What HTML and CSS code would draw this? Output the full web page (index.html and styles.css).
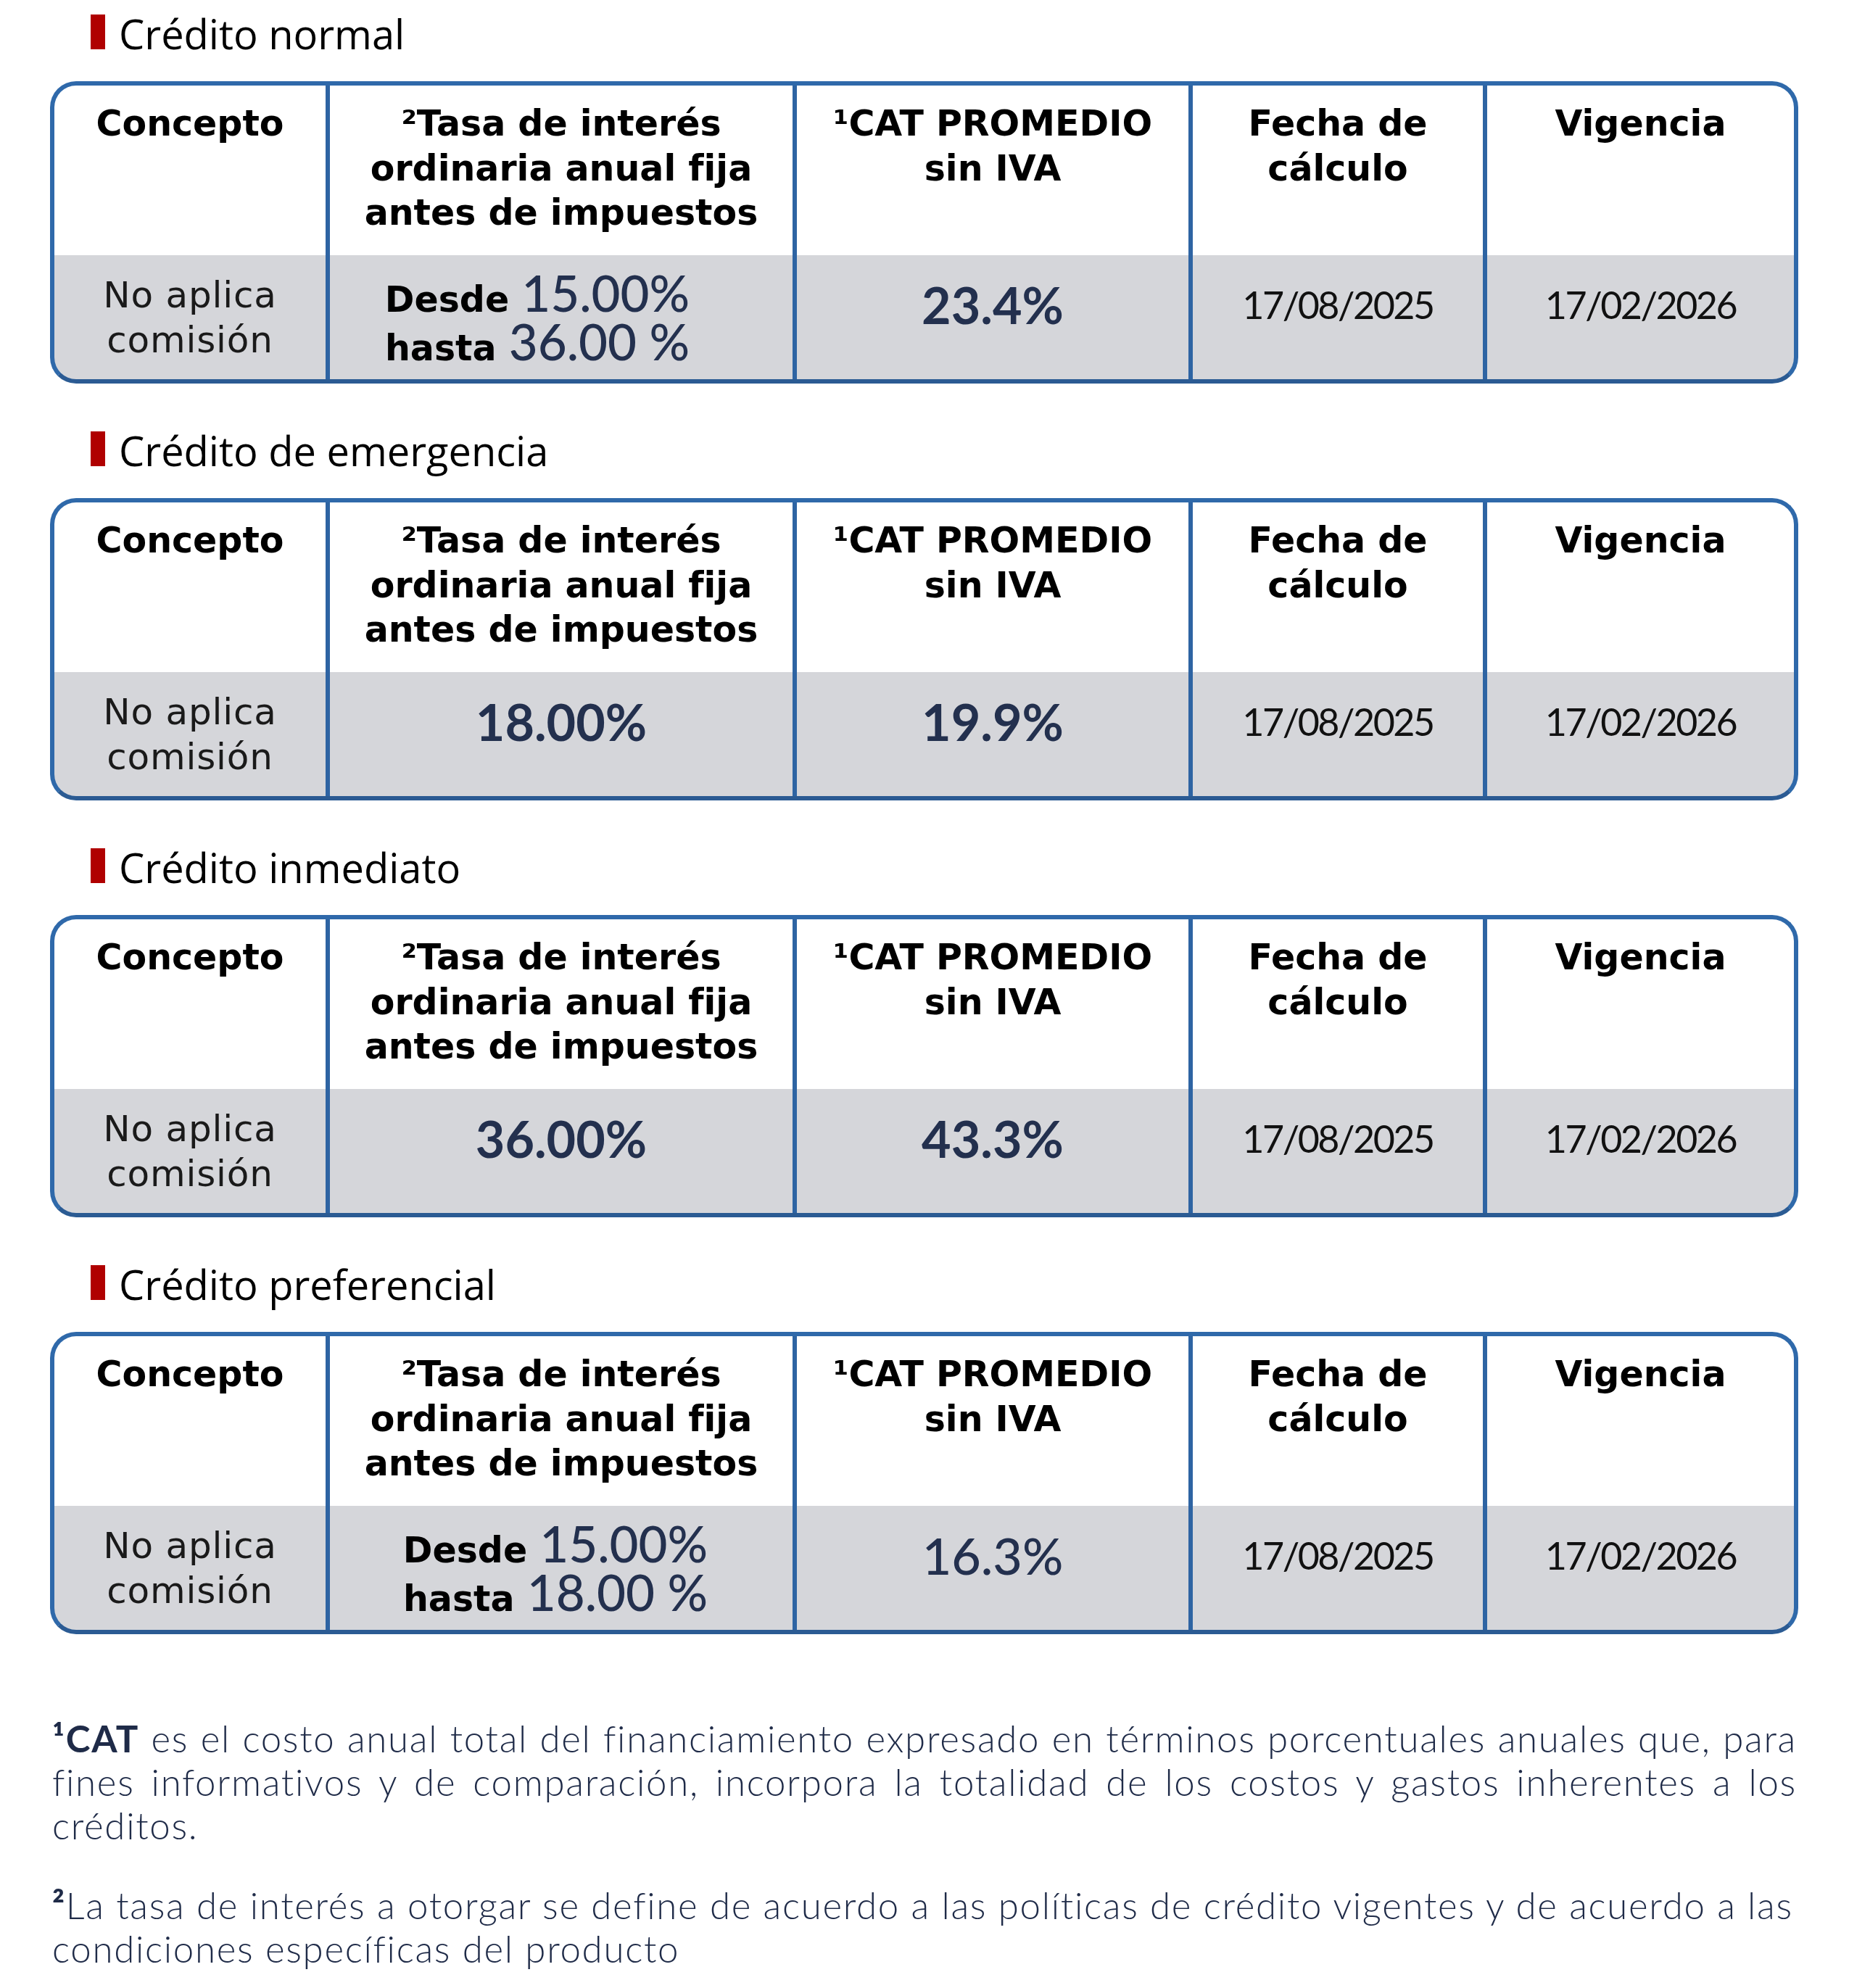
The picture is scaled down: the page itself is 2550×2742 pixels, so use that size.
FILE: index.html
```html
<!DOCTYPE html>
<html lang="es">
<head>
<meta charset="utf-8">
<title>Tasas de crédito</title>
<link rel="stylesheet" href="styles.css">
</head>
<body>
<main class="page">

  <section class="credit">
    <h2 class="credit__title">Crédito normal</h2>
    <div class="rate-table">
      <div class="rate-table__head">Concepto</div>
      <div class="rate-table__head">²Tasa de interés<br>ordinaria anual fija<br>antes de impuestos</div>
      <div class="rate-table__head">¹CAT PROMEDIO<br>sin IVA</div>
      <div class="rate-table__head">Fecha de<br>cálculo</div>
      <div class="rate-table__head">Vigencia</div>
      <div class="rate-table__cell"><span class="concept">No aplica<br>comisión</span></div>
      <div class="rate-table__cell"><span class="range range--offset"><span class="range__label">Desde</span> <span class="range__value">15.00%</span><br><span class="range__label">hasta</span> <span class="range__value">36.00 %</span></span></div>
      <div class="rate-table__cell rate-table__cell--single"><span class="value">23.4%</span></div>
      <div class="rate-table__cell rate-table__cell--single"><span class="date">17/08/2025</span></div>
      <div class="rate-table__cell rate-table__cell--single"><span class="date">17/02/2026</span></div>
    </div>
  </section>

  <section class="credit">
    <h2 class="credit__title">Crédito de emergencia</h2>
    <div class="rate-table">
      <div class="rate-table__head">Concepto</div>
      <div class="rate-table__head">²Tasa de interés<br>ordinaria anual fija<br>antes de impuestos</div>
      <div class="rate-table__head">¹CAT PROMEDIO<br>sin IVA</div>
      <div class="rate-table__head">Fecha de<br>cálculo</div>
      <div class="rate-table__head">Vigencia</div>
      <div class="rate-table__cell"><span class="concept">No aplica<br>comisión</span></div>
      <div class="rate-table__cell rate-table__cell--single"><span class="value">18.00%</span></div>
      <div class="rate-table__cell rate-table__cell--single"><span class="value">19.9%</span></div>
      <div class="rate-table__cell rate-table__cell--single"><span class="date">17/08/2025</span></div>
      <div class="rate-table__cell rate-table__cell--single"><span class="date">17/02/2026</span></div>
    </div>
  </section>

  <section class="credit">
    <h2 class="credit__title">Crédito inmediato</h2>
    <div class="rate-table">
      <div class="rate-table__head">Concepto</div>
      <div class="rate-table__head">²Tasa de interés<br>ordinaria anual fija<br>antes de impuestos</div>
      <div class="rate-table__head">¹CAT PROMEDIO<br>sin IVA</div>
      <div class="rate-table__head">Fecha de<br>cálculo</div>
      <div class="rate-table__head">Vigencia</div>
      <div class="rate-table__cell"><span class="concept">No aplica<br>comisión</span></div>
      <div class="rate-table__cell rate-table__cell--single"><span class="value">36.00%</span></div>
      <div class="rate-table__cell rate-table__cell--single"><span class="value">43.3%</span></div>
      <div class="rate-table__cell rate-table__cell--single"><span class="date">17/08/2025</span></div>
      <div class="rate-table__cell rate-table__cell--single"><span class="date">17/02/2026</span></div>
    </div>
  </section>

  <section class="credit">
    <h2 class="credit__title">Crédito preferencial</h2>
    <div class="rate-table">
      <div class="rate-table__head">Concepto</div>
      <div class="rate-table__head">²Tasa de interés<br>ordinaria anual fija<br>antes de impuestos</div>
      <div class="rate-table__head">¹CAT PROMEDIO<br>sin IVA</div>
      <div class="rate-table__head">Fecha de<br>cálculo</div>
      <div class="rate-table__head">Vigencia</div>
      <div class="rate-table__cell"><span class="concept">No aplica<br>comisión</span></div>
      <div class="rate-table__cell"><span class="range"><span class="range__label">Desde</span> <span class="range__value">15.00%</span><br><span class="range__label">hasta</span> <span class="range__value">18.00 %</span></span></div>
      <div class="rate-table__cell rate-table__cell--single"><span class="value value--medium">16.3%</span></div>
      <div class="rate-table__cell rate-table__cell--single"><span class="date">17/08/2025</span></div>
      <div class="rate-table__cell rate-table__cell--single"><span class="date">17/02/2026</span></div>
    </div>
  </section>

  <div class="notes">
    <p class="note note--justify"><b>¹CAT</b> es el costo anual total del financiamiento expresado en términos porcentuales anuales que, para fines informativos y de comparación, incorpora la totalidad de los costos y gastos inherentes a los créditos.</p>
    <p class="note"><b>²</b>La tasa de interés a otorgar se define de acuerdo a las políticas de crédito vigentes y de acuerdo a las condiciones específicas del producto</p>
  </div>

</main>
</body>
</html>
```

FILE: styles.css
```css
html, body {
  margin: 0;
  padding: 0;
  background: #ffffff;
}

.page {
  width: 2411px;
  margin-left: 69px;
  padding-top: 16px;
}

.credit {
  margin-bottom: 62px;
}

.credit__title {
  display: flex;
  align-items: baseline;
  gap: 19px;
  margin: 0 0 36px 56px;
  font-family: "Open Sans", "Noto Sans", sans-serif;
  font-weight: 400;
  font-size: 56px;
  line-height: 60px;
  color: #000000;
}

.credit__title::before {
  content: "";
  flex: none;
  width: 20px;
  height: 48px;
  background: #b00000;
}

.rate-table {
  display: grid;
  grid-template-columns: 374px 638px 540px 400px 423px;
  grid-template-rows: 234px 171px;
  column-gap: 6px;
  border: 6px solid #2f69aa;
  border-bottom-color: #2b5b93;
  border-radius: 36px;
  overflow: hidden;
  background: #2e64a3;
}

.rate-table__head {
  background: #ffffff;
  text-align: center;
  padding-top: 22px;
  font-family: "DejaVu Sans", sans-serif;
  font-weight: 700;
  font-size: 49px;
  line-height: 61.5px;
  color: #000000;
}

.rate-table__cell {
  background: #d5d6da;
  display: flex;
  align-items: center;
  justify-content: center;
  text-align: center;
}

.rate-table__cell--single {
  padding-bottom: 36px;
}

.concept {
  font-family: "DejaVu Sans", sans-serif;
  font-weight: 400;
  font-size: 50px;
  line-height: 62px;
  letter-spacing: 0.8px;
  color: #1a1a1a;
}

.range {
  padding-right: 16px;
  font-family: "DejaVu Sans", sans-serif;
  font-weight: 700;
  font-size: 49px;
  line-height: 49px;
  color: #000000;
}

.range--offset {
  padding-right: 66px;
}

.range__value {
  display: inline-block;
  font-family: "Lato", "Open Sans", sans-serif;
  font-weight: 500;
  font-size: 69px;
  line-height: 66px;
  color: #23304e;
}

.value {
  font-family: "Lato", "Open Sans", sans-serif;
  font-weight: 700;
  font-size: 70px;
  line-height: 70px;
  color: #23304e;
}

.value--medium {
  font-weight: 500;
}

.date {
  font-family: "Lato", "Open Sans", sans-serif;
  font-weight: 400;
  font-size: 52px;
  line-height: 52px;
  letter-spacing: -2.5px;
  color: #111111;
}

.notes {
  margin-top: 114px;
  padding-left: 3px;
  width: 2406px;
  font-family: "Lato", "Open Sans", sans-serif;
  font-weight: 300;
  font-size: 51px;
  line-height: 60px;
  letter-spacing: 1.7px;
  color: #1f2b48;
}

.note {
  margin: 0;
}

.note + .note {
  margin-top: 50px;
}

.note--justify {
  text-align: justify;
}

.note b {
  font-weight: 700;
}
```
